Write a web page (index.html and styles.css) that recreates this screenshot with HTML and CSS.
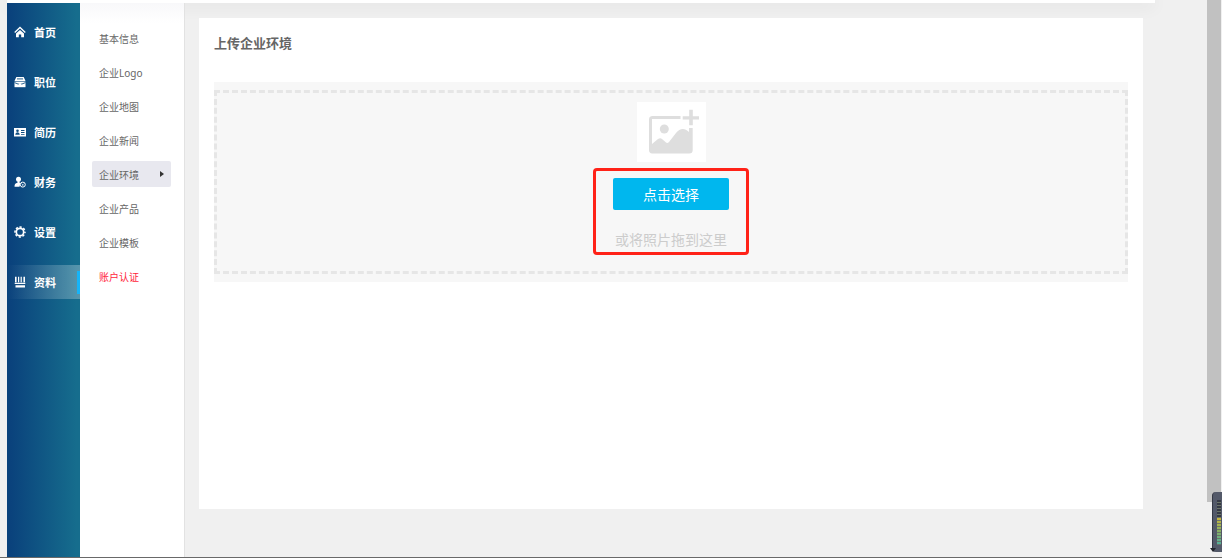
FILE: index.html
```
<!DOCTYPE html>
<html lang="zh-CN">
<head>
    <meta charset="UTF-8">
    <meta name="viewport" content="width=device-width, initial-scale=1.0">
    <title>企业环境</title>
    <link rel="stylesheet" href="styles.css">
</head>
<body>
    <div class="page">
        <header class="topbar"></header>

        <div class="layout">
            <nav class="sidebar">
                <a href="#" class="nav-item">
                    <svg class="nav-icon" viewBox="0 0 12 12"><path d="M.7 6.500L6 1.500l5.300 5" fill="none" stroke="currentColor" stroke-width="1.300"/><path d="M2 7.600l4-3.700 4 3.700v3.700H7.200V8.600H4.800v2.700H2z"/></svg>
                    首页
                </a>
                <a href="#" class="nav-item">
                    <svg class="nav-icon" viewBox="0 0 12 12"><path d="M2.300 1h7.400l1.800 4H.5z"/><path d="M3 2.900h6" stroke="#0f5082" stroke-width=".9"/><path d="M.5 5.600h11v5.600H.5z"/><path d="M.5 6.600L4 8h4l3.500-1.400" fill="none" stroke="#0f5082" stroke-width=".9"/><path d="M4.800 7.200h2.400V9H4.800z"/></svg>
                    职位
                </a>
                <a href="#" class="nav-item">
                    <svg class="nav-icon" viewBox="0 0 12 12"><path d="M0 2h12v8.500H0z"/><g fill="#0f4d80"><circle cx="3.500" cy="4.800" r="1.300"/><path d="M1.300 8.800c0-3.500 4.400-3.500 4.400 0z"/><path d="M7 4h3.500v1H7zM7 6h3.500v1H7zM7 8h3.500v.8H7z"/></g></svg>
                    简历
                </a>
                <a href="#" class="nav-item">
                    <svg class="nav-icon" viewBox="0 0 12 12"><circle cx="4.500" cy="3.200" r="2.500"/><path d="M3.500 5h2v1.500l1 .8-1 3.500H.5c0-2.500.6-3.300 3-4z"/><circle cx="8.800" cy="8.600" r="2.500" fill="none" stroke="currentColor"/><path d="M7.600 7.600l1.200 1.200 1.200-1.200M8.800 8.800v1.400" fill="none" stroke="currentColor" stroke-width=".7"/></svg>
                    财务
                </a>
                <a href="#" class="nav-item">
                    <svg class="nav-icon" viewBox="0 0 12 12"><circle cx="6" cy="6" r="3.700" fill="none" stroke="currentColor" stroke-width="1.700"/><circle cx="6" cy="6" r="5" fill="none" stroke="currentColor" stroke-width="1.500" stroke-dasharray="2.200 1.727" stroke-dashoffset="1.100"/></svg>
                    设置
                </a>
                <a href="#" class="nav-item active">
                    <svg class="nav-icon" viewBox="0 0 12 12"><path d="M1 .8h1.600v5.500H1zM4 .8h1.200v5.500H4zM6.600.8h1.200v5.500H6.600zM9.400.8H11v5.500H9.400zM.7 6.800h10.600v1.200H.7zM1.500 9.200H11v2.300H1.500z"/></svg>
                    资料
                </a>
            </nav>

            <nav class="submenu">
                <a href="#" class="sub-item">基本信息</a>
                <a href="#" class="sub-item">企业Logo</a>
                <a href="#" class="sub-item">企业地图</a>
                <a href="#" class="sub-item">企业新闻</a>
                <a href="#" class="sub-item current">企业环境</a>
                <a href="#" class="sub-item">企业产品</a>
                <a href="#" class="sub-item">企业模板</a>
                <a href="#" class="sub-item warn">账户认证</a>
            </nav>

            <main class="content">
                <section class="card">
                    <h1 class="card-title">上传企业环境</h1>
                    <div class="upload">
                        <div class="dropzone">
                            <svg class="upload-picture" viewBox="0 0 69 60">
                                <path fill="#fff" d="M0 0h69v60H0z"/>
                                <g fill="#dedede">
                                    <path d="M15 14h28.500v3H15v25l6-5c1.500-1 3-1 4 0l4 3.500c1 .8 2 .5 3-.5l7-9c4-5 8.500-5.500 13-1V26h3.700v22a3.500 3.500 0 0 1-3.500 3.500h-37A3.500 3.500 0 0 1 12 48V17.500a3.500 3.500 0 0 1 3-3.500z"/>
                                    <circle cx="27.300" cy="27" r="4.500"/>
                                    <path d="M52.200 7.700h3.600v6.600H62v3.200h-6.200v5.800h-3.600v-5.800h-6.500v-3.200h6.500z"/>
                                </g>
                            </svg>
                            <div class="pick-area">
                                <button type="button" class="pick-button">点击选择</button>
                                <p class="pick-tip">或将照片拖到这里</p>
                            </div>
                        </div>
                    </div>
                </section>
            </main>
        </div>
    </div>

    <div class="scroll-track">
        <div class="scroll-thumb"></div>
    </div>

    <div class="meter">
        <div class="meter-bars"></div>
    </div>
</body>
</html>
```
FILE: styles.css
```
* {
    margin: 0;
    padding: 0;
    box-sizing: border-box;
}

body {
    display: flex;
    min-height: 100vh;
    padding-left: 7px;
    background: #f0f0f0;
    border-bottom: 1px solid #696969;
    font-family: "Noto Sans", "Noto Sans CJK SC", sans-serif;
    color: #666;
}

a {
    color: inherit;
    text-decoration: none;
}

.page {
    flex: 1;
    display: flex;
    flex-direction: column;
}

.topbar {
    height: 3px;
    margin-right: 52px;
    background: #fff;
    box-shadow: 0 2px 16px rgba(0, 0, 30, 0.16);
}

.layout {
    flex: 1;
    display: flex;
}

/* left navigation */
.sidebar {
    width: 73px;
    padding-top: 12px;
    background: linear-gradient(90deg, #0a427c 5%, #166d8d 95%);
}

.nav-item {
    display: flex;
    align-items: center;
    gap: 8px;
    height: 34px;
    margin-bottom: 16px;
    padding-left: 7px;
    color: #fff;
    font-size: 11px;
    font-weight: bold;
}

.nav-item.active {
    background: linear-gradient(#16b4f8, #16b4f8) right center / 3px 23px no-repeat,
        linear-gradient(90deg, rgba(255, 255, 255, 0), rgba(255, 255, 255, 0.28));
}

.nav-icon {
    width: 12px;
    height: 12px;
    fill: currentColor;
}

/* second level menu */
.submenu {
    width: 105px;
    padding: 22px 13px 0 12px;
    background: linear-gradient(#f8f8fa, #fff 20px);
    border-right: 1px solid #e2e2e2;
}

.sub-item {
    display: flex;
    align-items: center;
    justify-content: space-between;
    height: 26px;
    margin-bottom: 8px;
    padding: 0 7px;
    border-radius: 2px;
    font-size: 10px;
}

.sub-item.current {
    background: #e8e8ef;
}

.sub-item.current::after {
    content: "";
    border: 3px solid transparent;
    border-left: 4px solid #333;
    border-right: 0;
}

.sub-item.warn {
    color: #ff1f3d;
}

/* main card */
.content {
    flex: 1;
    padding: 15px 64px 48px 14px;
}

.card {
    height: 100%;
    padding: 16px 15px;
    background: #fff;
}

.card-title {
    margin-bottom: 30px;
    font-size: 13px;
    line-height: 18px;
}

.upload {
    padding: 8px 0;
    background: #f7f7f7;
}

.dropzone {
    display: flex;
    flex-direction: column;
    align-items: center;
    padding: 9px 0 16px;
    border: 3px dashed #e6e6e6;
}

.upload-picture {
    width: 69px;
    height: 60px;
    margin-bottom: 6px;
}

.pick-area {
    padding: 7px 17px 0;
    border: 3px solid #ff2218;
    border-radius: 4px;
    text-align: center;
}

.pick-button {
    width: 116px;
    height: 32px;
    border: 0;
    border-radius: 2px;
    background: #00b7ee;
    color: #fff;
    font-family: inherit;
    font-size: 14px;
}

.pick-tip {
    margin-top: 18px;
    color: #ccc;
    font-size: 14px;
    line-height: 24px;
}

/* scrollbar */
.scroll-track {
    width: 15px;
    padding-right: 1px;
}

.scroll-thumb {
    height: 90vh;
    background: #c1c1c1;
}

/* floating level meter */
.meter {
    position: fixed;
    right: 0;
    bottom: 6px;
    width: 10px;
    height: 60px;
    padding: 8px 1px 7px 4px;
    border-left: 1px solid #343844;
    border-radius: 4px 0 0 4px;
    background: #535969;
}

.meter::after {
    content: "";
    position: absolute;
    left: -3px;
    bottom: 0;
    border: 3px solid transparent;
    border-top: 4px solid #22242c;
    border-bottom: 0;
}

.meter-bars {
    height: 100%;
    background: repeating-linear-gradient(transparent 0 2px, #6b7468 2px 3px), linear-gradient(#363a46 38%, #cfb63a 38%, #8fb05c 65%, #4fb0a0);
}
```
